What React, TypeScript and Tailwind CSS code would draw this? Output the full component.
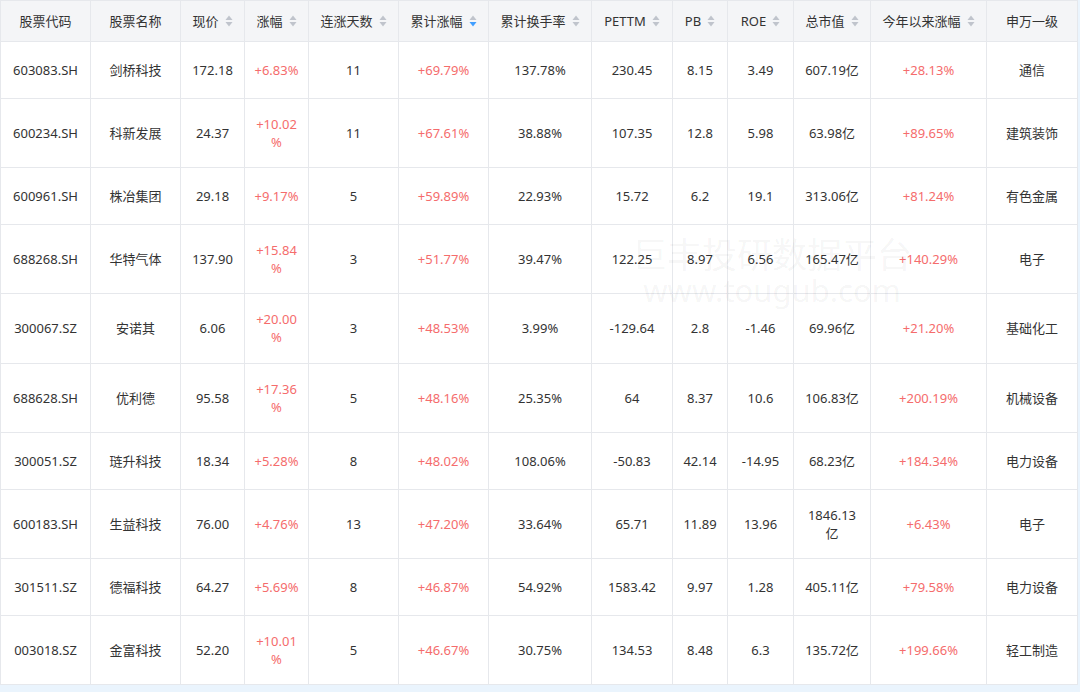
import React from 'react';

type Col = { key: string; label: string; width: number; sort?: 'none' | 'desc' };

const columns: Col[] = [
  { key: 'code', label: '股票代码', width: 90 },
  { key: 'name', label: '股票名称', width: 90 },
  { key: 'price', label: '现价', width: 64, sort: 'none' },
  { key: 'chg', label: '涨幅', width: 64, sort: 'none' },
  { key: 'days', label: '连涨天数', width: 90, sort: 'none' },
  { key: 'cum', label: '累计涨幅', width: 90, sort: 'desc' },
  { key: 'turn', label: '累计换手率', width: 103, sort: 'none' },
  { key: 'pe', label: 'PETTM', width: 81, sort: 'none' },
  { key: 'pb', label: 'PB', width: 55, sort: 'none' },
  { key: 'roe', label: 'ROE', width: 66, sort: 'none' },
  { key: 'cap', label: '总市值', width: 77, sort: 'none' },
  { key: 'ytd', label: '今年以来涨幅', width: 116, sort: 'none' },
  { key: 'sw', label: '申万一级', width: 91 },
];

const rows: string[][] = [
  ['603083.SH', '剑桥科技', '172.18', '+6.83%', '11', '+69.79%', '137.78%', '230.45', '8.15', '3.49', '607.19亿', '+28.13%', '通信'],
  ['600234.SH', '科新发展', '24.37', '+10.02\n%', '11', '+67.61%', '38.88%', '107.35', '12.8', '5.98', '63.98亿', '+89.65%', '建筑装饰'],
  ['600961.SH', '株冶集团', '29.18', '+9.17%', '5', '+59.89%', '22.93%', '15.72', '6.2', '19.1', '313.06亿', '+81.24%', '有色金属'],
  ['688268.SH', '华特气体', '137.90', '+15.84\n%', '3', '+51.77%', '39.47%', '122.25', '8.97', '6.56', '165.47亿', '+140.29%', '电子'],
  ['300067.SZ', '安诺其', '6.06', '+20.00\n%', '3', '+48.53%', '3.99%', '-129.64', '2.8', '-1.46', '69.96亿', '+21.20%', '基础化工'],
  ['688628.SH', '优利德', '95.58', '+17.36\n%', '5', '+48.16%', '25.35%', '64', '8.37', '10.6', '106.83亿', '+200.19%', '机械设备'],
  ['300051.SZ', '琏升科技', '18.34', '+5.28%', '8', '+48.02%', '108.06%', '-50.83', '42.14', '-14.95', '68.23亿', '+184.34%', '电力设备'],
  ['600183.SH', '生益科技', '76.00', '+4.76%', '13', '+47.20%', '33.64%', '65.71', '11.89', '13.96', '1846.13\n亿', '+6.43%', '电子'],
  ['301511.SZ', '德福科技', '64.27', '+5.69%', '8', '+46.87%', '54.92%', '1583.42', '9.97', '1.28', '405.11亿', '+79.58%', '电力设备'],
  ['003018.SZ', '金富科技', '52.20', '+10.01\n%', '5', '+46.67%', '30.75%', '134.53', '8.48', '6.3', '135.72亿', '+199.66%', '轻工制造'],
];

// 涨幅 / 累计涨幅 / 今年以来涨幅 shown in red
const redCols = new Set([3, 5, 11]);

function SortIcon({ active }: { active?: boolean }) {
  return (
    <svg width="8" height="12" viewBox="0 0 8 12" className="ml-[6px] shrink-0">
      <path d="M4 0.5 L7.5 5 L0.5 5 Z" fill="#c0c4cc" />
      <path d="M4 11.5 L7.5 7 L0.5 7 Z" fill={active ? '#409eff' : '#c0c4cc'} />
    </svg>
  );
}

export default function App() {
  return (
    <div className="relative w-[1080px] h-[692px] overflow-hidden bg-[#eaf4fd] font-['Noto_Sans','Noto_Sans_CJK_SC',sans-serif] text-[13px] text-[#333]">
      <table className="table-fixed border-collapse bg-white w-[1077px]">
        <colgroup>
          {columns.map((c) => (
            <col key={c.key} style={{ width: c.width }} />
          ))}
        </colgroup>
        <thead>
          <tr className="h-[41px] bg-[#f4f5f7]">
            {columns.map((c) => (
              <th key={c.key} className="border border-[#e6e8ec] font-normal text-[#333] px-0">
                <div className="flex items-center justify-center leading-[18px]">
                  <span>{c.label}</span>
                  {c.sort && <SortIcon active={c.sort === 'desc'} />}
                </div>
              </th>
            ))}
          </tr>
        </thead>
        <tbody>
          {rows.map((r) => {
            const tall = r.some((v) => v.includes('\n'));
            return (
              <tr key={r[0]} className={tall ? 'h-[69.5px]' : 'h-[56.5px]'}>
                {r.map((v, i) => (
                  <td
                    key={i}
                    className={
                      'border border-[#e6e8ec] text-center align-middle whitespace-pre-line leading-[18px] px-0 ' +
                      (redCols.has(i) ? 'text-[#f56c6c]' : 'text-[#333]')
                    }
                  >
                    {v}
                  </td>
                ))}
              </tr>
            );
          })}
        </tbody>
      </table>
      <div className="pointer-events-none absolute left-[632px] top-[233px] flex flex-col items-center text-[rgba(0,0,0,0.05)]">
        <div className="text-[35px] leading-[40px] font-['Noto_Sans_CJK_SC',sans-serif]">巨丰投研数据平台</div>
        <div className="text-[31px] leading-[34px] font-['Noto_Sans',sans-serif]">www.tougub.com</div>
      </div>
    </div>
  );
}
